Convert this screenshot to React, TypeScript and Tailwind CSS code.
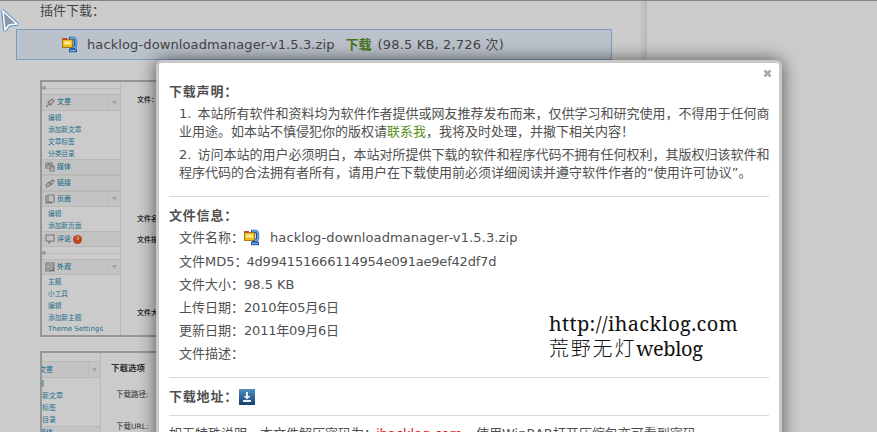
import React from "react";

const cjk = "font-['DejaVu_Sans','Noto_Sans_CJK_SC',sans-serif]";

function ZipIcon() {
  return (
    <svg width="16" height="17" viewBox="0 0 16 17" className="shrink-0">
      <path d="M7 2.500h4q2.500 0 2.500 2.500v4q0 2.500-2.500 2.500H8M11 11v3M7 14.500h8" fill="none" stroke="#1f559f" strokeWidth="3.400" />
      <path d="M8 2h3q3 0 3 3v4q0 2.500-3 2.500M8 14.500h6" fill="none" stroke="#72aee8" strokeWidth="1.400" />
      <path d="M.5 3.500h10v8H.5z" fill="#efbd22" stroke="#98700e" strokeWidth=".9" />
      <path d="M2 5.500h7v3H2z" fill="#fbe98b" />
      <path d="M0 2h5v2H0z" fill="#c84a22" />
    </svg>
  );
}

function MenuIcon({ kind }: { kind: string }) {
  return (
    <svg width="10" height="10" viewBox="0 0 10 10" fill="none" stroke="#777" strokeWidth="1.100" className="shrink-0">
      {kind === "pin" && <path d="M1 9l3-3M3 4l3 3 1-2 2-2-2-2-2 2z" />}
      {kind === "media" && <path d="M1 1h6v5H1zM4 4h5v5H5V6M2 4l2-2 2 2" />}
      {kind === "link" && <path d="M4 6l3-4 2 1-2 3-2 1M6 4L4 4 1 7l1 2 2-1 2-3" />}
      {kind === "page" && <path d="M3 1h6v7H3zM2 2H1v7h6" />}
      {kind === "comment" && <path d="M1 1h8v6H6L4 9V7H1z" />}
      {kind === "theme" && <path d="M1 1h8v8H1zM1 3h8M3 5v3M5 5h3v3H5z" />}
    </svg>
  );
}

function Head({ kind, label, arrow, badge, h }: { kind: string; label: string; arrow?: boolean; badge?: boolean; h: string }) {
  return (
    <div className={`flex items-center border-y border-[#b8b8b8] bg-[#c3c3c3] pl-[3px] text-[7px] font-medium ${h}`}>
      <MenuIcon kind={kind} />
      <span className="ml-[2px]">{label}</span>
      {badge && <span className="ml-[2px] flex h-[9px] w-[9px] items-center justify-center rounded-full bg-[#bd4420] text-[5px] text-[#ddd]">3</span>}
      {arrow && (
        <span className="ml-auto flex h-full w-[13px] items-center justify-center border-l border-[#bbb]">
          <svg width="5" height="4"><path d="M0 0h5L2.500 4z" fill="#a4a4a4" /></svg>
        </span>
      )}
    </div>
  );
}

function Sub({ items }: { items: string[] }) {
  return (
    <div className="pl-[6px] pt-[1px]">
      {items.map((t, i) => (
        <div key={i} className="h-[12px] text-[6.700px] leading-[12px]">{t}</div>
      ))}
    </div>
  );
}

function Collapse() {
  return (
    <div className="flex h-[8px] items-center">
      <span className="h-[4px] w-[4px] rounded-full bg-[#999]" />
      <span className="h-px flex-1 bg-[#bbb]" />
    </div>
  );
}

function AdminShot() {
  return (
    <div className="flex h-[257px] w-[400px] border-2 border-[#969696] bg-[#cbcbcb] text-[#28708d]">
      <div className="w-[79px] shrink-0 overflow-hidden border-r border-[#bababa] pt-[2px]">
        <Collapse />
        <div className="h-[2px]" />
        <Head kind="pin" label="文章" arrow h="h-[17px]" />
        <div className="h-[48px]"><Sub items={["编辑", "添加新文章", "文章标签", "分类目录"]} /></div>
        <Head kind="media" label="媒体" h="h-[16px]" />
        <Head kind="link" label="链接" h="h-[16px]" />
        <Head kind="page" label="页面" arrow h="h-[16px]" />
        <div className="h-[24px]"><Sub items={["编辑", "添加新页面"]} /></div>
        <Head kind="comment" label="评论" badge h="h-[16px]" />
        <div className="h-[2px]" />
        <Collapse />
        <div className="h-[2px]" />
        <Head kind="theme" label="外观" arrow h="h-[16px]" />
        <Sub items={["主题", "小工具", "编辑", "添加新主题"]} />
        <div className="pl-[6px] text-[7px] leading-[11px]">Theme Settings</div>
      </div>
      <div className="flex flex-col whitespace-nowrap pl-[16px] text-[7px] font-bold leading-[12px] text-[#303030]">
        <span className="mt-[12px]">文件：</span>
        <span className="mt-[107px]">文件名：</span>
        <span className="mt-[9px]">文件描述：</span>
        <span className="mt-[61px]">文件大小：</span>
      </div>
    </div>
  );
}

function OptionsShot() {
  return (
    <div className="mt-[14px] flex h-[120px] w-[400px] border-2 border-[#969696] bg-[#cbcbcb] text-[#28708d]">
      <div className="w-[59px] shrink-0 overflow-hidden whitespace-nowrap border-r border-[#bababa] pt-[8px] text-[7px] leading-[12px]">
        <div className="flex h-[17px] items-center border-y border-[#b8b8b8] bg-[#c3c3c3] font-medium">
          <span className="-ml-[3px]">文章</span>
          <span className="ml-auto flex h-full w-[12px] items-center justify-center border-l border-[#bbb]">
            <svg width="5" height="4"><path d="M0 0h5L2.500 4z" fill="#a4a4a4" /></svg>
          </span>
        </div>
        <div className="-ml-[12px] h-[12px]">编辑</div>
        <div className="-ml-[14px] h-[12px]">添加新文章</div>
        <div className="-ml-[14px] h-[12px]">文章标签</div>
        <div className="-ml-[14px] h-[12px]">分类目录</div>
        <div className="h-[16px] border-t border-[#b8b8b8] bg-[#c3c3c3] font-medium">
          <span className="-ml-[3px]">媒体</span>
        </div>
      </div>
      <div className="flex flex-col whitespace-nowrap pl-[10px] text-[#303030]">
        <span className="mt-[8px] text-[8.500px] font-bold leading-[14px]">下载选项</span>
        <span className="ml-[5px] mt-[14px] text-[7.500px] leading-[12px]">下载路径:</span>
        <span className="ml-[5px] mt-[20px] text-[7.500px] leading-[12px]">下载URL:</span>
      </div>
    </div>
  );
}

const rows = [
  { k: "文件MD5：", v: "4d994151666114954e091ae9ef42df7d", c: "-ml-[1px] tracking-[-0.200px]" },
  { k: "文件大小：", v: "98.5 KB", c: "" },
  { k: "上传日期：", v: "2010年05月6日", c: "tracking-[-0.200px]" },
  { k: "更新日期：", v: "2011年09月6日", c: "tracking-[-0.200px]" },
  { k: "文件描述：", v: "", c: "" },
];

function Dialog() {
  return (
    <section className="absolute left-[156px] top-[59px] h-[400px] w-[626px] rounded-[6px] border-[3px] border-[#c8c8c8] bg-white pl-[10px] pr-[10px] text-[13px] text-[#505050] shadow-[0_0_18px_rgba(0,0,0,0.6)]">
      <svg width="9" height="9" viewBox="0 0 9 9" className="absolute right-[7px] top-[6px]">
        <path d="M1.500 1.500l6 6M7.500 1.500l-6 6" stroke="#aaa" strokeWidth="2.600" />
      </svg>
      <h2 className="pt-[20px] text-[13px] font-bold leading-[18px] tracking-[0.800px]">下载声明：</h2>
      <div className="whitespace-nowrap pl-[10px] leading-[18px]">
        <div className="mt-[4px]"><span className="mr-[6px]">1.</span>本站所有软件和资料均为软件作者提供或网友推荐发布而来，仅供学习和研究使用，不得用于任何商</div>
        <div>业用途。如本站不慎侵犯你的版权请<span className="text-[#5d9122]">联系我</span>，我将及时处理，并撤下相关内容！</div>
        <div className="mt-[5px]"><span className="mr-[6px]">2.</span>访问本站的用户必须明白，本站对所提供下载的软件和程序代码不拥有任何权利，其版权归该软件和</div>
        <div>程序代码的合法拥有者所有，请用户在下载使用前必须详细阅读并遵守软件作者的“使用许可协议”。</div>
      </div>
      <div className="mt-[14px] h-px bg-[#d9d9d9]" />
      <h2 className="mt-[10px] text-[13px] font-bold leading-[18px] tracking-[0.800px]">文件信息：</h2>
      <div className="pl-[10px]">
        <div className="flex h-[25px] items-center">
          <span className="w-[65px] whitespace-nowrap">文件名称：</span>
          <ZipIcon />
          <span className="ml-[10px] tracking-[0.110px]">hacklog-downloadmanager-v1.5.3.zip</span>
        </div>
        {rows.map((r) => (
          <div key={r.k} className="flex h-[23px] items-center whitespace-nowrap">
            <span>{r.k}</span><span className={r.c}>{r.v}</span>
          </div>
        ))}
      </div>
      <div className="mt-[12px] h-px bg-[#d9d9d9]" />
      <div className="flex h-[37px] items-center">
        <b className="w-[70px] whitespace-nowrap tracking-[0.800px]">下载地址：</b>
        <svg width="16" height="16" viewBox="0 0 16 16">
          <defs><linearGradient id="dl" x2="0" y2="1"><stop stopColor="#4f91c5" /><stop offset="1" stopColor="#153f6c" /></linearGradient></defs>
          <rect width="16" height="16" fill="url(#dl)" />
          <path d="M7 3h2v4h2.500L8 10.500 4.500 7H7zM4 11h8v2H4z" fill="#e8f1f8" />
        </svg>
      </div>
      <div className="h-px bg-[#d9d9d9]" />
      <div className="mt-[9px] flex whitespace-nowrap leading-[18px]">
        <span className="w-[207px]">如无特殊说明，本文件解压密码为：</span>
        <span className="w-[100px] text-[#f01028]">ihacklog.com</span>
        <span>使用WinRAR打开压缩包亦可看到密码</span>
      </div>
      <div className="absolute left-[390px] top-[248px] whitespace-nowrap font-['Noto_Serif','Liberation_Serif','Noto_Sans_CJK_SC',serif] text-[20px] leading-[25px] text-[#111]">
        <div className="tracking-[0.370px]">http://ihacklog.com</div>
        <div><span className="font-light tracking-[1.800px]">荒野无灯</span><span className="tracking-[-0.400px]">weblog</span></div>
      </div>
    </section>
  );
}

export default function App() {
  return (
    <main className={`relative h-[432px] w-[877px] overflow-hidden border-t border-[#858585] bg-[#ccc] text-[13px] text-[#444] ${cjk}`}>
      <div className="flex h-full">
        <div className="w-[638px] shrink-0">
          <p className="h-[28px] pl-[40px] leading-[19px]">插件下载：</p>
          <div className="ml-[16px] flex h-[31px] w-[596px] items-center border border-[#7c9dbd] bg-[#bbc2cb] pl-[45px]">
            <ZipIcon />
            <span className="ml-[9px] tracking-[0.110px]">hacklog-downloadmanager-v1.5.3.zip</span>
            <b className="ml-[11px] text-[#47751c]">下载</b>
            <span className="ml-[6px] tracking-[0.170px]">(98.5 KB, 2,726 次)</span>
          </div>
          <div className="mt-[20px] pl-[40px]">
            <AdminShot />
            <OptionsShot />
          </div>
        </div>
        <div className="w-[9px] bg-gradient-to-r from-[#ccc] to-[#b8b8b8]" />
      </div>
      <Dialog />
      <svg width="22" height="36" viewBox="0 0 22 36" className="absolute left-0 -top-px">
        <path d="M3 11l14 13-8 1-4 5z" fill="#8b97a5" stroke="#4a90d0" strokeWidth="3.600" strokeLinejoin="round" />
        <path d="M3 11l14 13-8 1-4 5z" fill="#8b97a5" stroke="#fff" strokeWidth="1.500" />
      </svg>
    </main>
  );
}
